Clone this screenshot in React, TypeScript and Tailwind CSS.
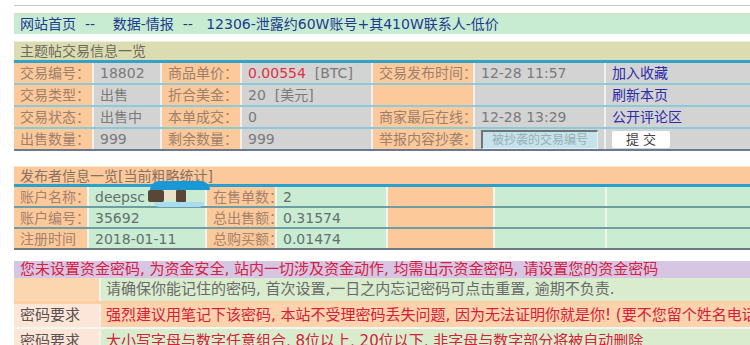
import React from "react";

const font = { fontFamily: '"DejaVu Sans", "Noto Sans CJK SC", sans-serif' };

function L({ w, children, cls = "text-[#9c806c]" }: { w: string; children?: React.ReactNode; cls?: string }) {
  return (
    <div className={`${w} shrink-0 h-full flex items-center px-[6px] bg-[#fcc99b] whitespace-nowrap ${cls}`}>
      {children}
    </div>
  );
}
function V({ w, children, cls = "text-[#7a7a7a]" }: { w: string; children?: React.ReactNode; cls?: string }) {
  return (
    <div className={`${w} shrink-0 h-full flex items-center px-[6px] bg-[#d3d3d3] whitespace-nowrap ${cls}`}>
      {children}
    </div>
  );
}
function G({ w, children }: { w: string; children?: React.ReactNode }) {
  return (
    <div className={`${w} shrink-0 h-full flex items-center px-[6px] bg-[#c9ecd2] text-[#627070] whitespace-nowrap`}>
      {children}
    </div>
  );
}

function Row1({ children, last = false }: { children: React.ReactNode; last?: boolean }) {
  return (
    <div className={`h-[22px] flex gap-[2px] bg-[#eef2ee] border-b-2 ${last ? "border-[#6c7890]" : "border-[#8ccad8]"}`}>
      {children}
    </div>
  );
}
function Row2({ children, last = false }: { children: React.ReactNode; last?: boolean }) {
  return (
    <div className={`relative h-[21px] flex gap-[2px] bg-[#eef6ee] border-b-2 ${last ? "border-[#707880]" : "border-[#6e9ea4]"}`}>
      {children}
    </div>
  );
}

const lab2 = "text-[#a4826c]";
const link = "text-[#2c2caa]";

export default function App() {
  return (
    <div className="w-[750px] h-[345px] overflow-hidden bg-white pl-[14px] text-[14px] leading-none" style={font}>
      <div className="h-[5px]" />
      <div className="h-px bg-[#c8c8c8]" />
      <div className="mt-[7px] h-[21px] border-t border-[#e4dac2] bg-[#c8ecd2] flex items-center pl-[6px] whitespace-pre text-[#1c3a8e]">
        {"网站首页  --    数据-情报  --   12306-泄露约60W账号+其410W联系人-低价"}
      </div>
      <div className="mt-[7px] h-[19px] border-t border-[#eeeedc] bg-[#dcdcb2] flex items-center pl-[6px] text-[#6c6c5c]">
        主题帖交易信息一览
      </div>
      <div className="h-[3px] bg-[#34a2c8]" />
      <Row1>
        <L w="w-[78px]">交易编号：</L>
        <V w="w-[66px]">18802</V>
        <L w="w-[78px]">商品单价：</L>
        <V w="w-[129px]">
          <span className="text-[#e0303e]">0.00554</span>
          <span className="whitespace-pre">{"  [BTC]"}</span>
        </V>
        <L w="w-[100px]">交易发布时间：</L>
        <V w="w-[129px]">12-28 11:57</V>
        <V w="flex-1" cls={link}>加入收藏</V>
      </Row1>
      <Row1>
        <L w="w-[78px]">交易类型：</L>
        <V w="w-[66px]">出售</V>
        <L w="w-[78px]">折合美金：</L>
        <V w="w-[129px]">
          <span className="whitespace-pre">{"20  [美元]"}</span>
        </V>
        <L w="w-[100px]"></L>
        <V w="w-[129px]"></V>
        <V w="flex-1" cls={link}>刷新本页</V>
      </Row1>
      <Row1>
        <L w="w-[78px]">交易状态：</L>
        <V w="w-[66px]">出售中</V>
        <L w="w-[78px]">本单成交：</L>
        <V w="w-[129px]">0</V>
        <L w="w-[100px]">商家最后在线：</L>
        <V w="w-[129px]">12-28 13:29</V>
        <V w="flex-1" cls={link}>公开评论区</V>
      </Row1>
      <Row1 last>
        <L w="w-[78px]">出售数量：</L>
        <V w="w-[66px]">999</V>
        <L w="w-[78px]">剩余数量：</L>
        <V w="w-[129px]">999</V>
        <L w="w-[100px]">举报内容抄袭：</L>
        <V w="w-[129px]">
          <div className="w-[122px] h-[19px] bg-[#c6e3ec] border-t-2 border-l-2 border-[#6c7478] border-b border-r border-b-[#e8f0f4] border-r-[#e8f0f4] flex items-center justify-center text-[12px] text-[#98aeb6]">
            被抄袭的交易编号
          </div>
        </V>
        <V w="flex-1">
          <div className="w-[58px] h-[17px] bg-white rounded-[2px] flex items-center justify-center text-[13px] text-[#444] whitespace-pre">
            {"提 交"}
          </div>
        </V>
      </Row1>

      <div className="mt-[15px] h-[18px] border-t border-[#fde6d0] bg-[#fbc99c] flex items-center pl-[6px] text-[#8a7060]">
        发布者信息一览[当前粗略统计]
      </div>
      <div className="h-[3px] bg-[#2ca0cc]" />
      <Row2>
        <L w="w-[73px]" cls={lab2}>账户名称：</L>
        <G w="w-[116px]">deepsc</G>
        <L w="w-[68px]" cls={lab2}>在售单数：</L>
        <G w="w-[109px]">2</G>
        <L w="w-[105px]"></L>
        <G w="w-[110px]"></G>
        <G w="flex-1"></G>
        <div className="absolute left-[136px] top-[-6px] w-[60px] h-[9px] rounded-t-[10px] bg-[#1a98d6]" />
        <div className="absolute left-[134px] top-[3px] w-[16px] h-[12px] bg-[#5a4636] rounded-[2px]" />
        <div className="absolute left-[162px] top-[3px] w-[10px] h-[12px] bg-[#5a4636] rounded-[1px]" />
        <div className="absolute left-[150px] top-[3px] w-[12px] h-[10px] bg-[#e8e0c8]" />
        <div className="absolute left-[140px] top-[15px] w-[50px] h-[5px] rounded-b-[6px] bg-[#a8dcf0]" />
      </Row2>
      <Row2>
        <L w="w-[73px]" cls={lab2}>账户编号：</L>
        <G w="w-[116px]">35692</G>
        <L w="w-[68px]" cls={lab2}>总出售额：</L>
        <G w="w-[109px]">0.31574</G>
        <L w="w-[105px]"></L>
        <G w="w-[110px]"></G>
        <G w="flex-1"></G>
      </Row2>
      <Row2 last>
        <L w="w-[73px]" cls={lab2}>注册时间</L>
        <G w="w-[116px]">2018-01-11</G>
        <L w="w-[68px]" cls={lab2}>总购买额：</L>
        <G w="w-[109px]">0.01474</G>
        <L w="w-[105px]"></L>
        <G w="w-[110px]"></G>
        <G w="flex-1"></G>
      </Row2>

      <div className="mt-[11px] h-[17px] bg-[#d6c6e4] flex items-center pl-[6px] text-[15px] text-[#d4203e] whitespace-nowrap">
        您未设置资金密码, 为资金安全, 站内一切涉及资金动作, 均需出示资金密码, 请设置您的资金密码
      </div>
      <div className="h-[23px] flex gap-[2px] bg-[#f4f0ea]">
        <div className="w-[85px] shrink-0 bg-[#fcd6ae]" />
        <div className="flex-1 flex items-center pl-[5px] bg-[#d9ecce] text-[15px] text-[#6a6a6a] whitespace-nowrap">
          请确保你能记住的密码, 首次设置,一日之内忘记密码可点击重置, 逾期不负责.
        </div>
      </div>
      <div className="h-[3px] bg-[#fbcfa4]" />
      <div className="h-[25px] flex gap-[2px] bg-[#f6f0ea] border-b-2 border-[#f2f6ee]">
        <div className="w-[85px] shrink-0 bg-[#fbe6d8] flex items-center pl-[6px] text-[15px] text-[#5c5050]">密码要求</div>
        <div className="flex-1 flex items-center pl-[5px] bg-[#fcd3ac] text-[15px] text-[#d42038] whitespace-nowrap overflow-hidden">
          强烈建议用笔记下该密码, 本站不受理密码丢失问题, 因为无法证明你就是你! (要不您留个姓名电话
        </div>
      </div>
      <div className="h-[24px] flex gap-[2px] bg-[#f6f0ea]">
        <div className="w-[85px] shrink-0 bg-[#fbe6d8] flex items-center pl-[6px] text-[15px] text-[#5c5050]">密码要求</div>
        <div className="flex-1 flex items-center pl-[5px] bg-[#d9ecce] text-[15px] text-[#d42038] whitespace-nowrap overflow-hidden">
          大小写字母与数字任意组合, 8位以上, 20位以下, 非字母与数字部分将被自动删除
        </div>
      </div>
    </div>
  );
}
